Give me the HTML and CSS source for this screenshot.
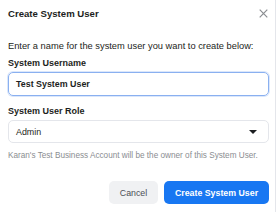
FILE: index.html
```html
<!DOCTYPE html>
<html lang="en">
<head>
    <meta charset="UTF-8">
    <title>Create System User</title>
    <link rel="stylesheet" href="styles.css">
</head>
<body>
    <div class="dialog">
        <div class="dialog__header">
            <h2 class="dialog__title">Create System User</h2>
            <button class="dialog__close" aria-label="Close">
                <svg width="9" height="9" viewBox="0 0 9 9">
                    <path d="M0.7 0.7 L8.3 8.3 M8.3 0.7 L0.7 8.3" stroke="#8a8d91" stroke-width="1.2" fill="none"/>
                </svg>
            </button>
        </div>
        <div class="dialog__body">
            <p class="intro">Enter a name for the system user you want to create below:</p>
            <label class="field-label">System Username</label>
            <div class="input input--focus">Test System User</div>
            <label class="field-label field-label--second">System User Role</label>
            <div class="input select">
                <span>Admin</span>
                <span class="select__arrow"></span>
            </div>
            <p class="hint">Karan's Test Business Account will be the owner of this System User.</p>
        </div>
        <div class="dialog__footer">
            <button class="btn btn--cancel">Cancel</button>
            <button class="btn btn--primary">Create System User</button>
        </div>
    </div>
</body>
</html>
```

FILE: styles.css
```css
* {
    box-sizing: border-box;
}

body {
    margin: 0;
    background: #fff;
    font-family: "Liberation Sans", Arial, sans-serif;
    color: #1c1e21;
}

.dialog {
    width: 276px;
    height: 212px;
    border-right: 1px solid #e4e6eb;
    background: #fff;
}

.dialog__header {
    display: flex;
    align-items: center;
    justify-content: space-between;
    height: 27px;
    padding: 0 7px 0 8px;
}

.dialog__title {
    margin: 0;
    font-size: 9.6px;
    font-weight: bold;
}

.dialog__close {
    border: 0;
    background: none;
    padding: 0;
    display: flex;
}

.dialog__body {
    padding: 12px 6px 0 8px;
}

.intro {
    margin: 0;
    font-size: 9.3px;
    line-height: 14px;
}

.field-label {
    display: block;
    margin-top: 4px;
    font-size: 9px;
    font-weight: bold;
    line-height: 12px;
}

.field-label--second {
    margin-top: 9px;
}

.input {
    margin-top: 3px;
    height: 24px;
    border: 1px solid #e4e6eb;
    border-radius: 5px;
    padding: 0 7px;
    font-size: 8.9px;
    display: flex;
    align-items: center;
}

.input--focus {
    border-color: #8ab0f0;
    box-shadow: 0 0 0 1px #dbe7fb;
    font-weight: bold;
}

.select {
    height: 23px;
    justify-content: space-between;
    padding-right: 11px;
}

.select__arrow {
    width: 0;
    height: 0;
    border-left: 4px solid transparent;
    border-right: 4px solid transparent;
    border-top: 4px solid #1c1e21;
}

.hint {
    margin: 7px 0 0 0;
    font-size: 8.2px;
    line-height: 12px;
    color: #8a8d91;
    white-space: nowrap;
}

.dialog__footer {
    display: flex;
    justify-content: flex-end;
    gap: 6px;
    padding: 19px 6px 0 0;
}

.btn {
    height: 23px;
    border: 0;
    border-radius: 5px;
    font-family: inherit;
    font-size: 8.8px;
    font-weight: bold;
    padding: 0;
}

.btn--cancel {
    background: #f0f1f3;
    color: #4b4f56;
    font-weight: normal;
    width: 49px;
}

.btn--primary {
    background: #1877f2;
    color: #fff;
    width: 105px;
}
```
